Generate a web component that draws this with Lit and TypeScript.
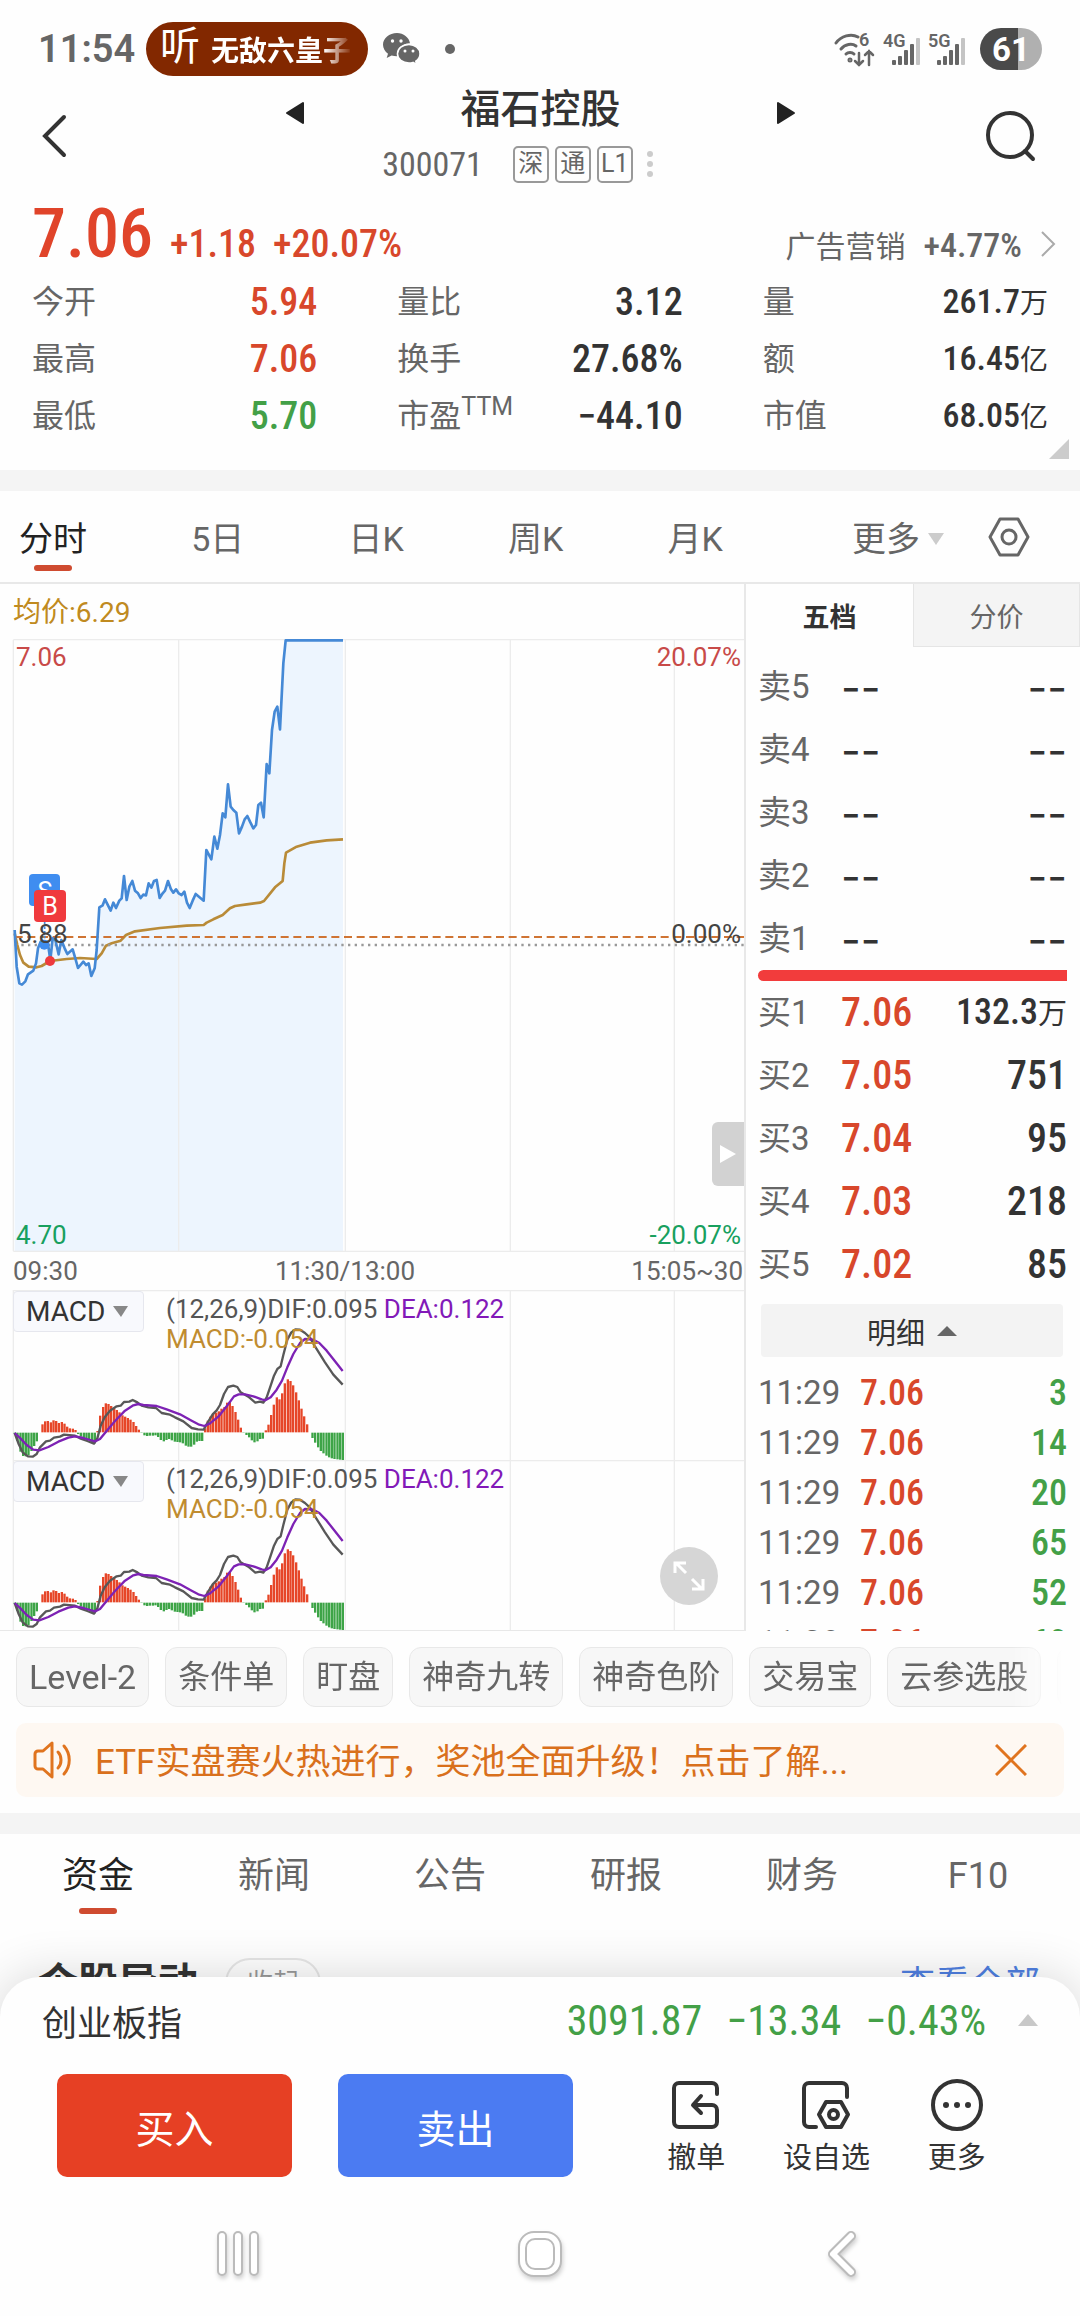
import { LitElement, html, svg, css } from "lit";
import { customElement } from "lit/decorators.js";
import { classMap } from "lit/directives/class-map.js";

type Point = [number, number];

const PRICE: Point[] = [
  [44, 930], [50, 1040], [58, 1090], [66, 1094], [76, 1084], [84, 1063], [100, 1052], [108, 1030], [114, 985], [122, 965],
  [134, 972], [143, 965], [151, 1020], [158, 955], [166, 960], [176, 1003], [184, 960], [194, 985], [202, 1002], [218, 988],
  [226, 1015], [234, 1044], [250, 1025], [258, 1035], [266, 1030], [274, 1068], [284, 1045], [290, 990], [298, 862],
  [308, 856], [315, 838], [332, 872], [340, 848], [348, 864], [358, 842], [365, 835], [372, 768], [380, 840], [388, 800],
  [397, 783], [405, 812], [414, 820], [422, 834], [430, 824], [438, 826], [446, 790], [454, 803], [462, 783], [470, 780],
  [479, 834], [488, 820], [495, 812], [504, 783], [513, 808], [520, 818], [528, 808], [536, 820], [545, 825], [553, 815],
  [561, 848], [569, 864], [578, 842], [587, 822], [611, 842], [619, 690], [634, 718], [643, 650], [652, 686], [660, 645],
  [668, 580], [676, 592], [684, 493], [692, 560], [700, 570], [709, 578], [717, 640], [726, 620], [734, 598], [742, 588],
  [750, 605], [760, 625], [768, 615], [775, 555], [783, 548], [791, 592], [800, 432], [808, 460], [816, 330], [824, 275],
  [832, 260], [840, 328], [850, 130], [857, 61], [1029, 61],
];

const AVERAGE: Point[] = [
  [44, 940], [52, 975], [60, 1005], [70, 1028], [86, 1040], [110, 1042], [125, 1038], [150, 1023], [200, 1017], [240, 1014],
  [290, 1017], [305, 1000], [318, 977], [335, 970], [362, 962], [378, 945], [405, 934], [480, 924], [560, 917], [611, 915],
  [620, 908], [640, 898], [668, 885], [690, 865], [705, 858], [740, 853], [780, 848], [792, 843], [825, 802], [848, 783],
  [853, 730], [858, 698], [890, 680], [930, 668], [980, 661], [1029, 658],
];

const DIF: Point[] = [
  [44, 492], [56, 525], [68, 550], [84, 562], [98, 563], [110, 555], [120, 535], [138, 517], [150, 515], [162, 506],
  [180, 503], [192, 497], [225, 500], [240, 508], [262, 516], [282, 524], [292, 508], [302, 470], [314, 445], [330, 425],
  [350, 412], [362, 410], [372, 399], [388, 398], [398, 393], [412, 400], [425, 410], [445, 415], [468, 417], [485, 432],
  [510, 437], [525, 445], [550, 457], [575, 477], [594, 481], [611, 482], [622, 462], [638, 436], [650, 424], [660, 408],
  [672, 375], [684, 354], [700, 350], [712, 354], [722, 370], [745, 383], [766, 401], [780, 398], [790, 401], [800, 385],
  [812, 350], [822, 320], [832, 300], [842, 292], [850, 258], [862, 212], [874, 190], [886, 181], [900, 182], [915, 192],
  [930, 206], [945, 232], [975, 280], [1000, 317], [1028, 347],
];

const DEA: Point[] = [
  [44, 492], [62, 509], [80, 528], [100, 542], [118, 544], [145, 534], [175, 518], [205, 506], [225, 502], [250, 507],
  [285, 517], [300, 510], [318, 488], [345, 456], [375, 425], [400, 409], [415, 405], [430, 408], [470, 411], [500, 421],
  [540, 436], [575, 455], [595, 466], [613, 471], [630, 463], [655, 443], [680, 412], [702, 382], [716, 376], [735, 376],
  [760, 382], [785, 391], [796, 394], [812, 385], [830, 362], [846, 335], [862, 295], [880, 255], [900, 222], [915, 210],
  [940, 212], [958, 222], [980, 245], [1005, 277], [1028, 306],
];

const HISTOGRAM: Point[] = [
  [44, -4], [52, -25], [60, -55], [68, -70], [80, -72], [88, -66], [96, -52], [106, -32], [113, -22], [118, 0],
  [122, 16], [130, 28], [140, 37], [149, 27], [158, 36], [166, 36], [175, 28], [183, 31], [191, 29], [199, 18], [208, 12],
  [222, 11], [230, 3], [236, -8], [244, -14], [262, -18], [276, -30], [286, -32], [291, -2], [295, 22], [300, 50],
  [311, 82], [319, 89], [327, 84], [336, 76], [352, 66], [368, 50], [385, 42], [401, 30], [410, 16], [418, 5], [425, -2],
  [436, -10], [470, -8], [482, -22], [492, -26], [505, -18], [520, -26], [545, -30], [558, -40], [570, -44], [582, -36],
  [592, -25], [611, -25], [614, 8], [620, 30], [634, 52], [643, 60], [652, 58], [662, 70], [676, 78], [685, 98], [693, 86],
  [701, 72], [709, 54], [718, 26], [726, 2], [735, -4], [747, -14], [757, -25], [767, -32], [777, -20], [788, -18],
  [794, -4], [799, 12], [807, 26], [815, 60], [823, 90], [832, 109], [840, 96], [848, 124], [856, 154], [865, 161],
  [873, 152], [882, 136], [890, 114], [898, 90], [906, 65], [915, 40], [923, 18], [929, 0], [938, -18], [946, -32],
  [955, -46], [963, -56], [972, -64], [985, -73], [1000, -79], [1032, -82],
];

const points = (list: Point[]) => list.map((p) => p.join(",")).join(" ");

const valueAt = (list: Point[], x: number): number => {
  for (let i = 1; i < list.length; i++) {
    const [x0, y0] = list[i - 1];
    const [x1, y1] = list[i];
    if (x <= x1) return y0 + ((y1 - y0) * (x - x0)) / (x1 - x0);
  }
  return list[list.length - 1][1];
};

const BARS = Array.from({ length: 120 }, (_, i) => {
  const x = Math.round(41 + i * 8.27);
  return { x, v: Math.round(valueAt(HISTOGRAM, x + 3)) };
});

const base = css`
  * {
    box-sizing: border-box;
  }
  button {
    font: inherit;
    color: inherit;
    background: none;
    border: 0;
    padding: 0;
    margin: 0;
  }
  svg {
    display: block;
    flex: none;
  }
  .num {
    font-family: "Roboto Condensed", "Liberation Sans Narrow", Roboto, "Noto Sans CJK SC", sans-serif;
    font-weight: 500;
  }
  .up {
    color: #d8472b;
  }
  .down {
    color: #43a047;
  }
`;

@customElement("status-bar")
export class StatusBar extends LitElement {
  static styles = [
    base,
    css`
      :host {
        display: flex;
        align-items: center;
        height: 80px;
        padding: 18px 38px 0 38px;
        color: #666;
      }
      .clock {
        font-size: 38px;
        font-weight: 600;
        line-height: 54px;
        width: 108px;
      }
      .pill {
        display: flex;
        align-items: center;
        width: 222px;
        height: 54px;
        padding: 0 16px 0 14px;
        border-radius: 27px;
        background: #822800;
        color: #fff;
        white-space: nowrap;
      }
      .listen {
        font-size: 40px;
        width: 51px;
        line-height: 50px;
        padding-bottom: 4px;
        font-weight: 400;
      }
      .song {
        flex: 1;
        overflow: hidden;
        font-size: 28px;
        font-weight: 700;
        -webkit-mask-image: linear-gradient(90deg, #000 80%, transparent);
        mask-image: linear-gradient(90deg, #000 80%, transparent);
      }
      .wechat {
        margin-left: 15px;
      }
      .dot {
        width: 10px;
        height: 10px;
        border-radius: 5px;
        background: #666;
        margin-left: 24px;
      }
      .right {
        display: flex;
        align-items: center;
        gap: 5px;
        margin-left: auto;
      }
      .battery {
        display: flex;
        align-items: center;
        justify-content: center;
        width: 62px;
        height: 42px;
        margin-left: 7px;
        border-radius: 21px;
        background: linear-gradient(90deg, #4a4a4a 62%, #b0b0b0 62%);
        color: #fff;
        font-size: 33px;
        font-weight: 700;
      }
      .net {
        font: 600 18px Roboto, sans-serif;
        fill: #666;
      }
    `,
  ];

  private signal(label: string) {
    return svg`<svg width="40" height="36" viewBox="0 0 40 36" aria-hidden="true">
      <text class="net" x="0" y="16">${label}</text>
      <g fill="#666">
        <rect x="9" y="29" width="4" height="5" rx="1"/>
        <rect x="15" y="25" width="4" height="9" rx="1"/>
        <rect x="21" y="19" width="4" height="15" rx="1"/>
        <rect x="27" y="13" width="4" height="21" rx="1"/>
      </g>
      <rect x="33" y="7" width="4" height="27" rx="1" fill="#c4c4c4"/>
    </svg>`;
  }

  render() {
    return html`
      <span class="clock">11:54</span>
      <div class="pill"><span class="listen">听</span><span class="song">无敌六皇子</span></div>
      <svg class="wechat" width="38" height="32" viewBox="0 0 38 32" fill="#666" aria-hidden="true">
        <path d="M14 0C6.200 0 0 5.200 0 11.700c0 3.600 2 6.800 5 9l-1.300 4.200 4.900-2.500c1.700.5 3.400.8 5.400.8C13 17 18 10.300 27 10.200 26 4.300 20.500 0 14 0z"/>
        <path d="M26 11.500c-6.500 0-11.500 4.100-11.500 9.300S19.500 30 26 30c1.400 0 2.700-.2 4-.6l3.800 2.100-1-3.300c2.600-1.700 4.200-4.300 4.200-7.400 0-5.200-5-9.300-11-9.300z" stroke="#fff" stroke-width="1.500"/>
        <g fill="#fff"><circle cx="9.500" cy="8" r="1.700"/><circle cx="18" cy="8" r="1.700"/><circle cx="22" cy="18" r="1.500"/><circle cx="30" cy="18" r="1.500"/></g>
      </svg>
      <span class="dot"></span>
      <div class="right">
        <svg width="44" height="36" viewBox="0 0 44 36" fill="none" stroke="#666" stroke-width="3" stroke-linecap="round" aria-hidden="true">
          <path d="M2 12C7 5 17 2 24 6"/><path d="M7 18c4-5 11-6 15-3"/><path d="M12 23c2-2 6-2 8 0"/>
          <circle cx="16" cy="29" r="1"/>
          <path d="M25 22v12M21 30l4 4 4-4M35 34V20M31 24l4-4 4 4" stroke-width="2.500"/>
          <text class="net" x="25" y="15" stroke="none">6</text>
        </svg>
        ${this.signal("4G")} ${this.signal("5G")}
        <span class="battery">61</span>
      </div>
    `;
  }
}

@customElement("stock-header")
export class StockHeader extends LitElement {
  static styles = [
    base,
    css`
      :host {
        display: grid;
        grid-template-columns: 90px 1fr 90px;
        align-items: center;
        height: 112px;
        padding: 0 25px 0 10px;
        color: #333;
      }
      .side {
        display: flex;
        justify-content: center;
      }
      .mid {
        display: flex;
        flex-direction: column;
        gap: 10px;
        padding-bottom: 4px;
      }
      .titles {
        display: flex;
        align-items: center;
        justify-content: space-between;
        padding: 0 169px 0 185px;
      }
      .titles button {
        padding-top: 6px;
      }
      h1 {
        margin: 0;
        font-size: 40px;
        line-height: 50px;
        font-weight: 500;
      }
      .sub {
        display: flex;
        align-items: center;
        justify-content: center;
        gap: 6px;
        height: 38px;
        padding-right: 30px;
        color: #666;
      }
      .code {
        font-size: 34px;
        font-weight: 400;
        margin-right: 24px;
      }
      .tag {
        width: 36px;
        height: 37px;
        border: 2px solid #999;
        border-radius: 5px;
        font-size: 25px;
        line-height: 32px;
        text-align: center;
      }
      .dots {
        margin-left: 8px;
      }
    `,
  ];

  render() {
    return html`
      <button class="side" aria-label="返回">
        <svg width="28" height="44" viewBox="0 0 28 44" fill="none" stroke="#333" stroke-width="4" stroke-linecap="round"><path d="M23 3L4 22l19 19"/></svg>
      </button>
      <div class="mid">
        <div class="titles">
          <button aria-label="上一只"><svg width="20" height="24" viewBox="0 0 20 24" fill="#222" stroke="#222" stroke-width="2" stroke-linejoin="round"><path d="M18 2v20L2 12z"/></svg></button>
          <h1>福石控股</h1>
          <button aria-label="下一只"><svg width="20" height="24" viewBox="0 0 20 24" fill="#222" stroke="#222" stroke-width="2" stroke-linejoin="round"><path d="M2 2v20l16-10z"/></svg></button>
        </div>
        <div class="sub">
          <span class="code num">300071</span>
          <span class="tag">深</span><span class="tag">通</span><span class="tag">L1</span>
          <svg class="dots" width="6" height="28" viewBox="0 0 6 28" fill="#ccc"><circle cx="3" cy="4" r="3"/><circle cx="3" cy="14" r="3"/><circle cx="3" cy="24" r="3"/></svg>
        </div>
      </div>
      <button class="side" aria-label="搜索">
        <svg width="56" height="56" viewBox="0 0 56 56" fill="none" stroke="#333" stroke-width="4" stroke-linecap="round"><circle cx="28" cy="27" r="22"/><path d="M43 43l8 8"/></svg>
      </button>
    `;
  }
}

@customElement("quote-summary")
export class QuoteSummary extends LitElement {
  static styles = [
    base,
    css`
      :host {
        display: block;
        position: relative;
        padding: 6px 32px 25px;
      }
      .price {
        display: flex;
        align-items: baseline;
        gap: 17px;
        height: 76px;
        line-height: 72px;
        margin-right: -8px;
      }
      .last {
        font-size: 68px;
        color: #e0442a;
      }
      .chg {
        font-size: 38px;
      }
      .sector {
        display: flex;
        align-items: baseline;
        gap: 18px;
        margin-left: auto;
        color: #666;
        font-size: 30px;
      }
      .sector .num {
        font-size: 34px;
      }
      .stats {
        display: grid;
        grid-template-columns: repeat(3, 1fr);
        column-gap: 80px;
        margin: 0;
      }
      .stat {
        display: flex;
        align-items: center;
        justify-content: space-between;
        height: 57px;
        line-height: 57px;
      }
      dt {
        font-size: 32px;
        color: #666;
        white-space: nowrap;
      }
      sup {
        font-size: 25px;
        line-height: 20px;
      }
      dd {
        margin: 0;
        font-size: 38px;
        color: #333;
      }
      dd.small {
        font-size: 34px;
      }
      .unit {
        font-size: 28px;
        font-weight: 400;
      }
      dd.up {
        color: #d8472b;
      }
      dd.down {
        color: #43a047;
      }
      .corner {
        position: absolute;
        right: 11px;
        bottom: 11px;
      }
    `,
  ];

  private stats = [
    ["今开", "", "5.94", "", "up"],
    ["量比", "", "3.12", "", ""],
    ["量", "", "261.7", "万", "small"],
    ["最高", "", "7.06", "", "up"],
    ["换手", "", "27.68%", "", ""],
    ["额", "", "16.45", "亿", "small"],
    ["最低", "", "5.70", "", "down"],
    ["市盈", "TTM", "−44.10", "", ""],
    ["市值", "", "68.05", "亿", "small"],
  ];

  render() {
    return html`
      <div class="price">
        <span class="last num">7.06</span>
        <span class="chg num up">+1.18</span>
        <span class="chg num up">+20.07%</span>
        <span class="sector"><span>广告营销</span><span class="num">+4.77%</span>
          <svg width="16" height="26" viewBox="0 0 16 26" fill="none" stroke="#aaa" stroke-width="2"><path d="M2 1l12 12L2 25"/></svg>
        </span>
      </div>
      <dl class="stats">
        ${this.stats.map(
          ([label, sup, value, unit, tone]) => html`<div class="stat">
            <dt>${label}${sup ? html`<sup>${sup}</sup>` : ""}</dt>
            <dd class="num ${tone}">${value}${unit ? html`<span class="unit">${unit}</span>` : ""}</dd>
          </div>`
        )}
      </dl>
      <svg class="corner" width="20" height="20" viewBox="0 0 20 20" fill="#ccc"><path d="M20 0v20H0z"/></svg>
    `;
  }
}

@customElement("period-tabs")
export class PeriodTabs extends LitElement {
  static styles = [
    base,
    css`
      :host {
        display: flex;
        align-items: center;
        justify-content: space-between;
        height: 93px;
        padding: 0 50px 0 19px;
        border-bottom: 2px solid #e8e8e8;
        font-size: 34px;
        color: #666;
      }
      .periods {
        display: flex;
        justify-content: space-between;
        flex: 0 1 704px;
      }
      .tab {
        display: flex;
        flex-direction: column;
        align-items: center;
        line-height: 50px;
        padding-top: 12px;
      }
      .tab::after {
        content: "";
        width: 38px;
        height: 6px;
        border-radius: 3px;
        margin-top: 1px;
      }
      .tab.on {
        color: #222;
      }
      .tab.on::after {
        background: #cf4b30;
      }
      .more {
        display: flex;
        align-items: center;
        gap: 8px;
        line-height: 50px;
        padding-top: 4px;
      }
      .tools {
        display: flex;
        align-items: center;
        gap: 44px;
      }
    `,
  ];

  render() {
    return html`
      <div class="periods">
        ${["分时", "5日", "日K", "周K", "月K"].map(
          (t, i) => html`<button class=${classMap({ tab: true, on: i === 0 })}>${t}</button>`
        )}
      </div>
      <div class="tools">
        <button class="more">更多 <svg width="16" height="12" viewBox="0 0 16 12" fill="#ccc"><path d="M0 0h16L8 12z"/></svg></button>
        <button aria-label="设置">
          <svg width="42" height="40" viewBox="0 0 42 40" fill="none" stroke="#666" stroke-width="3" stroke-linejoin="round"><path d="M12 2h18l10 18-10 18H12L2 20z"/><circle cx="21" cy="20" r="7"/></svg>
        </button>
      </div>
    `;
  }
}

@customElement("price-chart")
export class PriceChart extends LitElement {
  static styles = [
    base,
    css`
      :host {
        display: block;
        position: relative;
        font-size: 26px;
      }
      .avg {
        height: 55px;
        padding: 0 13px;
        line-height: 58px;
        color: #c08a20;
        font-size: 28px;
      }
      .plot {
        width: 100%;
        height: auto;
      }
      text {
        font: 26px Roboto, sans-serif;
      }
      .badge {
        font-size: 25px;
        fill: #fff;
      }
      .times {
        display: grid;
        grid-template-columns: 1fr auto 1fr;
        height: 38px;
        padding: 0 1px 0 13px;
        line-height: 38px;
        color: #666;
      }
      .times span:nth-child(2) {
        padding-right: 66px;
      }
      .times span:last-child {
        text-align: right;
      }
      .expand {
        position: absolute;
        right: 0;
        bottom: 104px;
        width: 32px;
        height: 64px;
        border-radius: 6px 0 0 6px;
        background: #d2d2d2;
        display: flex;
        align-items: center;
        justify-content: center;
      }
    `,
  ];

  render() {
    return html`
      <div class="avg">均价:6.29</div>
      <svg class="plot" viewBox="0 0 744 613" role="img" aria-label="分时走势">
        <g transform="scale(0.333333) translate(0 -57)">
          <polygon fill="#edf5fe" points="${points(PRICE)} 1029,1894 44,1894"></polygon>
          <g stroke="#ececec" stroke-width="4" fill="none">
            <path d="M40 59H2232M40 1894H2232M40 59V1894M536 59V1894M1036 59V1894M1531 59V1894M2023 59V1894"></path>
          </g>
          <polyline fill="none" stroke="#b98b38" stroke-width="8" stroke-linejoin="round" points=${points(AVERAGE)}></polyline>
          <path d="M44 951H2232" stroke="#cf7433" stroke-width="6" stroke-dasharray="24 14"></path>
          <path d="M44 975H2232" stroke="#999" stroke-width="7" stroke-dasharray="7 13"></path>
          <polyline fill="none" stroke="#4589d6" stroke-width="8" stroke-linejoin="round" points=${points(PRICE)}></polyline>
          <path d="M134 905V960" stroke="#4589d6" stroke-width="5" stroke-dasharray="8 6"></path>
          <circle cx="133" cy="974" r="15" fill="#3f8df0"></circle>
          <circle cx="150" cy="1023" r="15" fill="#ee3a3e"></circle>
        </g>
        <rect x="29" y="235" width="31" height="32" rx="4" fill="#3f8df0"></rect>
        <text class="badge" x="45" y="261" text-anchor="middle">S</text>
        <rect x="34" y="251" width="32" height="32" rx="4" fill="#f03a3e"></rect>
        <text class="badge" x="50" y="276" text-anchor="middle">B</text>
        <text x="16" y="27" fill="#c84a48">7.06</text>
        <text x="741" y="27" fill="#c84a48" text-anchor="end">20.07%</text>
        <text x="17" y="304" fill="#444">5.88</text>
        <text x="741" y="304" fill="#444" text-anchor="end">0.00%</text>
        <text x="16" y="605" fill="#18a05e">4.70</text>
        <text x="741" y="605" fill="#18a05e" text-anchor="end">-20.07%</text>
      </svg>
      <div class="times"><span>09:30</span><span>11:30/13:00</span><span>15:05~30</span></div>
      <button class="expand" aria-label="展开">
        <svg width="18" height="20" viewBox="0 0 18 20" fill="#fff"><path d="M1 1l16 9-16 9z"/></svg>
      </button>
    `;
  }
}

@customElement("macd-chart")
export class MacdChart extends LitElement {
  static styles = [
    base,
    css`
      :host {
        display: block;
        position: relative;
        font-size: 26px;
      }
      .plot {
        width: 100%;
        height: auto;
      }
      .top {
        position: absolute;
        top: 1px;
        left: 13px;
        display: flex;
        gap: 22px;
      }
      .pick {
        display: flex;
        align-items: center;
        gap: 8px;
        width: 131px;
        height: 41px;
        padding-left: 12px;
        border: 1px solid #e6e7ee;
        border-radius: 4px;
        background: #f8f9fd;
        color: #333;
        font-size: 28px;
      }
      .legend {
        line-height: 30px;
        color: #555;
        padding-top: 3px;
      }
      .dea {
        color: #8219b8;
      }
      .macd {
        color: #c08c30;
      }
    `,
  ];

  render() {
    return html`
      <svg class="plot" viewBox="0 0 744 170" role="img" aria-label="MACD">
        <g transform="scale(0.333333) translate(0 -63)">
          <path fill="none" stroke="#ececec" stroke-width="4" d="M40 65H2232M40 63V573M536 63V573M1036 63V573M1531 63V573M2023 63V573"></path>
          ${BARS.map((b) =>
            b.v >= 0
              ? svg`<rect x=${b.x} y=${490 - b.v} width="7" height=${b.v} fill="#e64628"></rect>`
              : svg`<rect x=${b.x} y="491" width="7" height=${-b.v} fill="#3da447"></rect>`
          )}
          <g fill="none" stroke-width="7" stroke-linejoin="round">
            <polyline stroke="#585858" points=${points(DIF)}></polyline>
            <polyline stroke="#7d22b4" points=${points(DEA)}></polyline>
          </g>
        </g>
      </svg>
      <div class="top">
        <button class="pick">MACD <svg width="15" height="11" viewBox="0 0 15 11" fill="#888"><path d="M0 0h15L8 11z"/></svg></button>
        <div class="legend">(12,26,9)DIF:0.095 <span class="dea">DEA:0.122</span><br /><span class="macd">MACD:-0.054</span></div>
      </div>
    `;
  }
}

@customElement("order-book")
export class OrderBook extends LitElement {
  static styles = [
    base,
    css`
      :host {
        display: block;
        overflow: hidden;
        contain: size;
        border-left: 2px solid #e8e8e8;
      }
      .tabs {
        display: grid;
        grid-template-columns: 1fr 1fr;
        height: 63px;
        font-size: 27px;
      }
      .tabs button {
        color: #666;
        background: #f4f4f4;
        border: 1px solid #e5e5e5;
        border-top: 0;
      }
      .tabs .on {
        color: #333;
        background: none;
        font-weight: 700;
        border: 0;
      }
      table {
        width: 100%;
        border-collapse: collapse;
        table-layout: fixed;
      }
      th,
      td {
        padding: 0;
        height: 63px;
        line-height: 40px;
        text-align: left;
        white-space: nowrap;
      }
      th {
        width: 95px;
        padding-left: 12px;
        font-size: 33px;
        font-weight: 400;
        color: #666;
      }
      td {
        width: 100px;
        font-size: 40px;
        color: #333;
      }
      td.up {
        color: #d8472b;
      }
      td.down {
        color: #43a047;
      }
      td:last-child {
        width: auto;
        text-align: right;
        padding-right: 13px;
      }
      td.none {
        font-family: Inter, Roboto, sans-serif;
        font-size: 43px;
        font-weight: 400;
      }
      .small {
        font-size: 36px;
      }
      .unit {
        font-size: 29px;
        font-weight: 400;
      }
      .sell {
        margin-top: 8px;
      }
      .ratio {
        height: 11px;
        margin: 0 13px 0 12px;
        border-radius: 6px 0 0 6px;
        background: #f23c3c;
      }
      .detail {
        display: flex;
        align-items: center;
        justify-content: center;
        gap: 12px;
        width: calc(100% - 32px);
        height: 53px;
        margin: 8px 16px 11px 15px;
        border-radius: 4px;
        background: #f3f3f3;
        color: #333;
        font-size: 29px;
      }
      .ticks th,
      .ticks td {
        height: 50px;
      }
      .ticks th {
        width: 114px;
      }
      .ticks td {
        font-size: 36px;
      }
    `,
  ];

  private bids = [
    ["7.06", "132.3万"],
    ["7.05", "751"],
    ["7.04", "95"],
    ["7.03", "218"],
    ["7.02", "85"],
  ];

  render() {
    return html`
      <div class="tabs"><button class="on">五档</button><button>分价</button></div>
      <table class="sell">
        <tbody>
          ${[5, 4, 3, 2, 1].map((n) => html`<tr><th scope="row">卖${n}</th><td class="none">--</td><td class="none">--</td></tr>`)}
        </tbody>
      </table>
      <div class="ratio"></div>
      <table>
        <tbody>
          ${this.bids.map(
            ([price, qty], i) => html`<tr>
              <th scope="row">买${i + 1}</th>
              <td class="num up">${price}</td>
              <td class="num">${qty.endsWith("万") ? html`<span class="small">${qty.slice(0, -1)}</span><span class="unit">万</span>` : qty}</td>
            </tr>`
          )}
        </tbody>
      </table>
      <button class="detail">明细 <svg width="20" height="10" viewBox="0 0 20 10" fill="#666"><path d="M10 0l10 10H0z"/></svg></button>
      <table class="ticks">
        <tbody>
          ${["3", "14", "20", "65", "52", "60"].map(
            (q) => html`<tr><th scope="row">11:29</th><td class="num up">7.06</td><td class="num down">${q}</td></tr>`
          )}
        </tbody>
      </table>
    `;
  }
}

@customElement("tool-strip")
export class ToolStrip extends LitElement {
  static styles = [
    base,
    css`
      :host {
        display: block;
        padding: 16px 16px;
      }
      .chips {
        display: flex;
        gap: 16px;
        overflow: hidden;
        -webkit-mask-image: linear-gradient(90deg, #000 95%, transparent);
        mask-image: linear-gradient(90deg, #000 95%, transparent);
      }
      .chip {
        flex: none;
        height: 60px;
        padding: 0 12px;
        border: 1px solid #e8e8e8;
        border-radius: 12px;
        background: #f7f7f7;
        color: #666;
        font-size: 32px;
        line-height: 56px;
      }
      .chip.latin {
        font-size: 34px;
      }
      .notice {
        display: flex;
        align-items: center;
        height: 74px;
        margin-top: 16px;
        padding: 0 37px 0 16px;
        border-radius: 10px;
        background: #fef8f2;
        color: #d9701c;
        font-size: 35px;
      }
      .text {
        flex: 1;
        margin-left: 23px;
        padding-bottom: 4px;
        color: inherit;
        text-decoration: none;
        white-space: nowrap;
      }
    `,
  ];

  render() {
    return html`
      <div class="chips">
        ${["Level-2", "条件单", "盯盘", "神奇九转", "神奇色阶", "交易宝", "云参选股"].map(
          (t) => html`<button class=${classMap({ chip: true, latin: t === "Level-2" })}>${t}</button>`
        )}
        <span class="chip" aria-hidden="true"></span>
      </div>
      <div class="notice">
        <svg width="40" height="40" viewBox="0 0 40 40" fill="none" stroke="#e0741f" stroke-width="3" stroke-linecap="round" stroke-linejoin="round">
          <path d="M20 3v34l-9-8H6a3 3 0 0 1-3-3V14a3 3 0 0 1 3-3h5z"/><path d="M26 12c4 4 4 12 0 16M32 6c7 8 7 20 0 28"/>
        </svg>
        <a class="text" href="#etf">ETF实盘赛火热进行，奖池全面升级！点击了解...</a>
        <button aria-label="关闭"><svg width="32" height="32" viewBox="0 0 32 32" fill="none" stroke="#e0741f" stroke-width="3"><path d="M1 1l30 30M31 1L1 31"/></svg></button>
      </div>
    `;
  }
}

@customElement("info-section")
export class InfoSection extends LitElement {
  static styles = [
    base,
    css`
      .tabs {
        display: grid;
        grid-template-columns: repeat(6, 1fr);
        padding: 17px 14px 0 10px;
        font-size: 36px;
        color: #666;
      }
      .tab {
        display: flex;
        flex-direction: column;
        align-items: center;
        line-height: 50px;
      }
      .tab::after {
        content: "";
        width: 38px;
        height: 6px;
        margin-top: 7px;
        border-radius: 3px;
      }
      .tab.on {
        color: #222;
      }
      .tab.on::after {
        background: #cf4b30;
      }
      .head {
        display: flex;
        align-items: center;
        padding: 41px 40px 0 38px;
      }
      h2 {
        margin: 0;
        font-size: 40px;
        line-height: 50px;
        font-weight: 700;
        color: #333;
      }
      .fold {
        height: 50px;
        margin-left: 27px;
        padding: 0 20px;
        border: 2px solid #e6e6e6;
        border-radius: 25px;
        font-size: 26px;
        line-height: 40px;
        color: #999;
      }
      .all {
        margin-left: auto;
        padding-bottom: 4px;
        font-size: 35px;
        color: #4f7fe0;
        text-decoration: none;
      }
    `,
  ];

  render() {
    return html`
      <div class="tabs">
        ${["资金", "新闻", "公告", "研报", "财务", "F10"].map(
          (t, i) => html`<button class=${classMap({ tab: true, on: i === 0 })}>${t}</button>`
        )}
      </div>
      <div class="head">
        <h2>个股异动</h2>
        <button class="fold">收起</button>
        <a class="all" href="#all">查看全部</a>
      </div>
    `;
  }
}

@customElement("trade-sheet")
export class TradeSheet extends LitElement {
  static styles = [
    base,
    css`
      :host {
        display: block;
        position: relative;
        margin-top: -40px;
        border-radius: 40px 40px 0 0;
        background: #fefefe;
        box-shadow: 0 0 50px rgba(0, 0, 0, 0.16);
        color: #333;
      }
      .index {
        display: flex;
        align-items: center;
        gap: 24px;
        height: 86px;
        padding: 0 42px 0 42px;
        font-size: 35px;
      }
      .index .num {
        font-size: 42px;
        font-weight: 400;
      }
      .name {
        flex: 1;
      }
      .index svg {
        margin-left: 8px;
      }
      .actions {
        display: flex;
        padding: 11px 58px 0 57px;
      }
      .trade {
        width: 235px;
        height: 103px;
        margin-right: 46px;
        border-radius: 10px;
        color: #fff;
        font-size: 39px;
      }
      .buy {
        background: #e64024;
      }
      .sellbtn {
        background: #4b7bf2;
      }
      .icons {
        display: grid;
        grid-template-columns: repeat(3, 1fr);
        flex: 1;
        margin-left: 12px;
      }
      .icon {
        display: flex;
        flex-direction: column;
        align-items: center;
        gap: 8px;
        padding-top: 5px;
        font-size: 29px;
        line-height: 38px;
        white-space: nowrap;
      }
      .nav {
        display: flex;
        justify-content: space-between;
        align-items: center;
        height: 139px;
        padding: 14px 214px 0 214px;
      }
      .nav svg {
        filter: drop-shadow(1px 3px 2px rgba(0, 0, 0, 0.18));
      }
    `,
  ];

  render() {
    return html`
      <div class="index">
        <span class="name">创业板指</span>
        <span class="num down">3091.87</span><span class="num down">−13.34</span><span class="num down">−0.43%</span>
        <svg width="20" height="12" viewBox="0 0 20 12" fill="#c8c8c8"><path d="M10 0l10 12H0z"/></svg>
      </div>
      <div class="actions">
        <button class="trade buy">买入</button>
        <button class="trade sellbtn">卖出</button>
        <div class="icons">
          <button class="icon">
            <svg width="52" height="52" viewBox="0 0 52 52" fill="none" stroke="#333" stroke-width="4" stroke-linecap="round" stroke-linejoin="round">
              <path d="M47 15V9a5 5 0 0 0-5-5H9a5 5 0 0 0-5 5v34a5 5 0 0 0 5 5h33a5 5 0 0 0 5-5V31a5 5 0 0 0-5-5H24"/><path d="M31 17l-8 9 8 8"/>
            </svg>撤单
          </button>
          <button class="icon">
            <svg width="52" height="52" viewBox="0 0 52 52" fill="none" stroke="#333" stroke-width="4" stroke-linecap="round" stroke-linejoin="round">
              <path d="M47 18V9a5 5 0 0 0-5-5H9a5 5 0 0 0-5 5v34a5 5 0 0 0 5 5h7"/><path d="M26 23h15l7 12.500L41 48H26l-7-12.500z"/><circle cx="33.500" cy="35.500" r="4.500"/>
            </svg>设自选
          </button>
          <button class="icon">
            <svg width="52" height="52" viewBox="0 0 52 52" fill="none" stroke="#333" stroke-width="4">
              <circle cx="26" cy="26" r="24"/><g fill="#333" stroke="none"><circle cx="15" cy="26" r="3"/><circle cx="26" cy="26" r="3"/><circle cx="37" cy="26" r="3"/></g>
            </svg>更多
          </button>
        </div>
      </div>
      <div class="nav">
        <button aria-label="最近任务">
          <svg width="48" height="50" viewBox="0 0 48 50" fill="#fff" stroke="#bbb" stroke-width="2"><rect x="4" y="3" width="8" height="43" rx="4"/><rect x="20" y="3" width="8" height="43" rx="4"/><rect x="36" y="3" width="8" height="43" rx="4"/></svg>
        </button>
        <button aria-label="主屏幕">
          <svg width="48" height="50" viewBox="0 0 48 50" fill="#fff" stroke="#bbb" stroke-width="2"><rect x="3" y="3" width="42" height="44" rx="15"/><rect x="10" y="10" width="28" height="30" rx="9"/></svg>
        </button>
        <button aria-label="返回">
          <svg width="48" height="50" viewBox="0 0 48 50" fill="none" stroke-linecap="round" stroke-linejoin="round"><path d="M33 7L15 25l18 18" stroke="#bbb" stroke-width="10"/><path d="M33 7L15 25l18 18" stroke="#fff" stroke-width="6"/></svg>
        </button>
      </div>
    `;
  }
}

@customElement("app-root")
export class AppRoot extends LitElement {
  static styles = [
    base,
    css`
      :host {
        display: flex;
        flex-direction: column;
        height: 100vh;
        overflow: hidden;
        background: #fefefe;
        font-family: Roboto, "Noto Sans CJK SC", sans-serif;
        color: #333;
      }
      main {
        flex: 1;
        min-height: 0;
        overflow: hidden;
      }
      .band {
        height: 21px;
        background: #f4f4f4;
      }
      .market {
        display: grid;
        grid-template-columns: 744fr 336fr;
      }
      .charts {
        position: relative;
        border-bottom: 1px solid #e8e8e8;
      }
      .full {
        position: absolute;
        right: 26px;
        bottom: 25px;
        width: 58px;
        height: 58px;
        border-radius: 29px;
        background: #d6d6d6;
        display: flex;
        align-items: center;
        justify-content: center;
      }
    `,
  ];

  render() {
    return html`
      <main>
        <status-bar></status-bar>
        <stock-header></stock-header>
        <quote-summary></quote-summary>
        <div class="band"></div>
        <period-tabs></period-tabs>
        <div class="market">
          <div class="charts">
            <price-chart></price-chart>
            <macd-chart></macd-chart>
            <macd-chart></macd-chart>
            <button class="full" aria-label="全屏">
              <svg width="32" height="32" viewBox="0 0 32 32" fill="none" stroke="#fff" stroke-width="3"><path d="M13 13L3 3M2 13V3h11M19 19l10 10M30 19v10H19"/></svg>
            </button>
          </div>
          <order-book></order-book>
        </div>
        <tool-strip></tool-strip>
        <div class="band"></div>
        <info-section></info-section>
      </main>
      <trade-sheet></trade-sheet>
    `;
  }
}
